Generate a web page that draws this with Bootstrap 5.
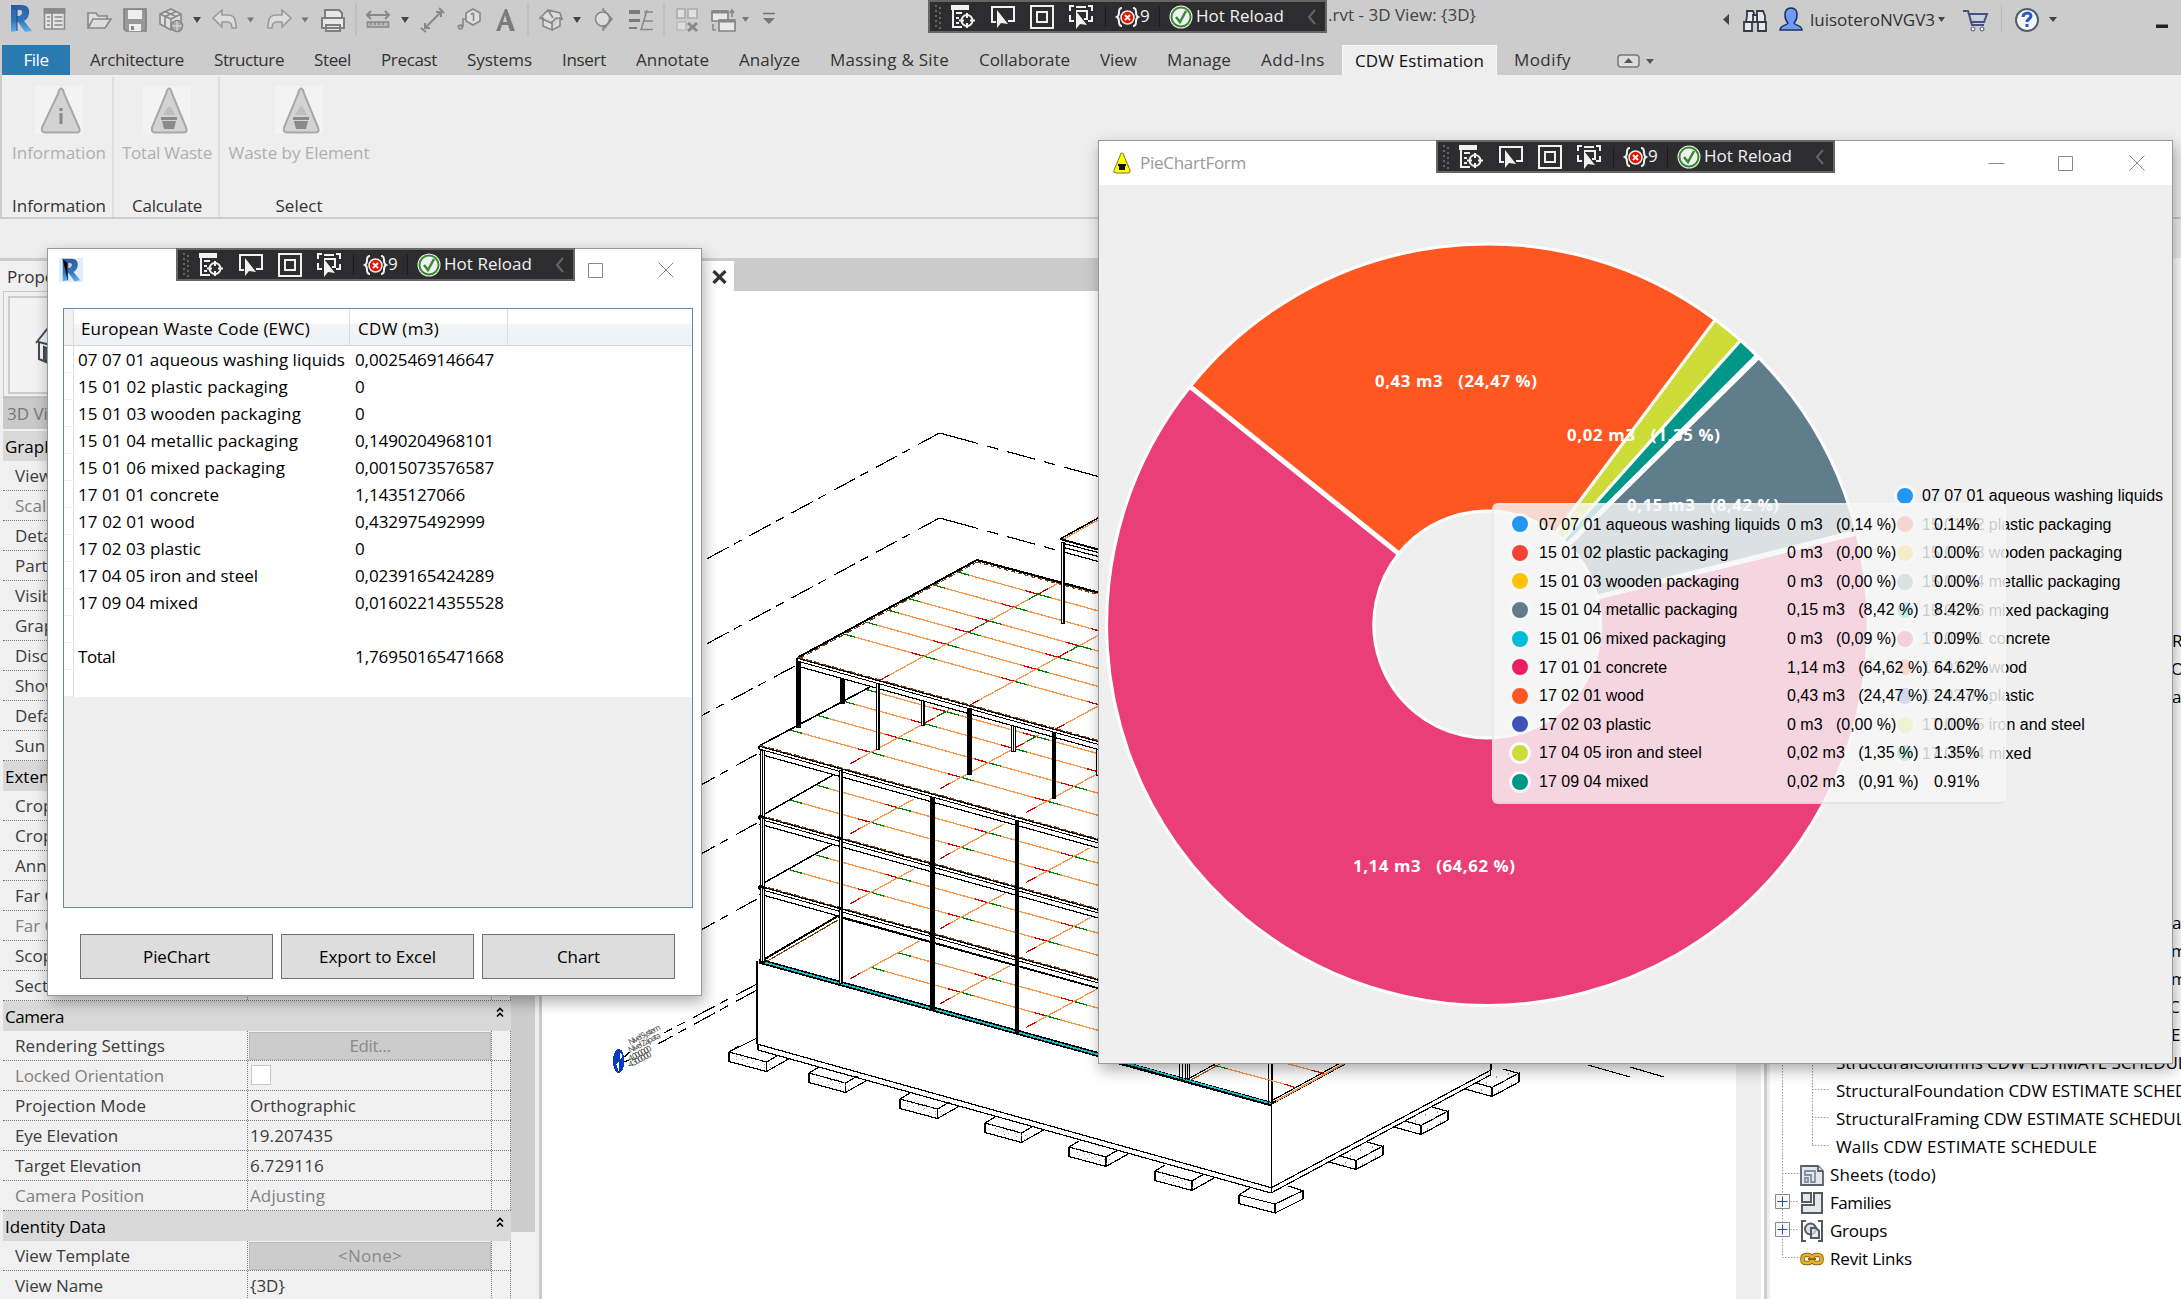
<!DOCTYPE html>
<html lang="en">
<head>
<meta charset="utf-8">
<meta name="viewport" content="width=device-width, initial-scale=1">
<title>3D View: {3D}</title>
<link rel="stylesheet" href="https://cdn.jsdelivr.net/npm/bootstrap@5.3.0/dist/css/bootstrap.min.css">
<script src="https://cdn.jsdelivr.net/npm/bootstrap@5.3.0/dist/js/bootstrap.bundle.min.js"></script>
<style>
body{margin:0;overflow:hidden;background:#eee;font-family:"Open Sans","Noto Sans",sans-serif;font-size:17px;line-height:1.2;color:#333}
.app{width:2181px;height:1299px;overflow:hidden}
svg{display:block;flex:none}
[data-w]{white-space:pre;display:inline-block}
.titlebar{height:45px;background:#ccc}
.tabs{height:30px;background:#ccc;padding-left:2px}
.tabs .nav-link{height:30px;padding:0 15px;color:#333;border:0;border-radius:0;display:flex;align-items:center;line-height:28px}
.tabs .nav-link.file-tab{background:#2a7ab2;color:#fff;width:68px;padding:0;justify-content:center;margin-right:5px}
.tabs .nav-link.active{background:#eee;color:#111;border:1px solid #f6f6f6;border-bottom:0;padding:0 12px;margin:0 0 0 2px}
.ribbon{height:144px;background:#eee;border-bottom:2px solid #ccc;border-left:2px solid #ccc}
.rpanel{border-right:2px solid #ddd;margin-top:2px;height:140px}
.rpanel:last-child{border:0}
.rpanel .dis{color:#b0b0b0;margin-top:9px;height:22px}
.rpanel .cap{margin-bottom:1px}
.titlebar,.tabs,.ribbon,.spacer,.fixcol,.props,.split,.canvas3d{flex:none}
.spacer{height:39px}
main{min-height:0}
.props{width:539px;background:#f0f0f0;border-top:3px solid #ccc;padding-left:3px}
.ptable{width:508px}
.phead{height:30px;background:#d9d9d9;color:#000;padding-left:2px;line-height:31px;display:flex;justify-content:space-between;padding-right:6px}
.phead svg{margin-top:5px}
.prow{height:30px;border-bottom:1px dotted #777;display:flex;line-height:29px;color:#3c3c3c}
.prow>div:nth-child(1){width:244px;padding-left:12px}
.prow>div:nth-child(2){width:244px;padding-left:2px;border-left:1px dotted #777}
.prow>div:nth-child(3){flex:1;border-left:1px dotted #777;border-right:1px dotted #777}
.prow.off{color:#808080}
.pbtn{background:#ccc;border:1px solid #bbb;color:#8a8a8a;height:28px;line-height:26px;text-align:center;margin:1px 0 0 -1px}
.pcheck{width:20px;height:20px;background:#fff;border:1px solid #c8c8c8;margin:4px 0 0 1px}
.preview{height:106px;border:1px solid #c8c8c8;padding:4px}
.preview>div{border:2px solid #ccc;height:98px;padding:27px 0 0 24px;background:#f2f2f2}
.selrow{height:32px;background:#c9c9c9;color:#777;line-height:32px;padding-left:4px;margin-bottom:2px;border-top:1px solid #bbb}
.scroller{width:24px}
.scroller .thumb{height:971px;background:#cdcdcd}
.split{width:3px;background:#ccc}
.canvas3d{width:1194px;background:#fff}
.viewtabs{height:33px;background:#cbcbcb}
.vtab{width:192px;height:30px;margin-top:3px;background:#fff;padding-right:7px}
.tree{background:#fff;color:#000;position:relative;min-width:0}
.tree .trow{height:28px;padding-left:60px;white-space:nowrap;gap:6px}
.tree .trow.sub{padding-left:66px}
.win{position:absolute;background:#fff;border:1px solid #999;box-shadow:2px 6px 14px rgba(0,0,0,.32);overflow:visible}
.dbgbar{position:absolute;width:399px;height:33px;background:#2d2d30;border:2px solid #666;z-index:5;color:#f1f1f1}
.dbgbar svg{position:absolute;left:-2px;top:-2px}
.dbgbar span{position:absolute;font-size:17px;line-height:20px;top:4px}
.gridbox{margin:59px 8px 0 15px;height:600px;border:1px solid #688caf;background:#efefef;color:#000}
.ghead{height:37px;background:linear-gradient(#fff 40%,#f3f4f6 42%,#eff1f3);border-bottom:1px solid #d5d5d5}
.ghead>div{height:36px;line-height:39px;border-right:1px solid #dcdcdc}
.grow{height:27px;line-height:27px;background:#fff}
.grow>div:first-child,.ghead>div:first-child{width:10px;background:#fff;border-right:1px solid #ddd}
.grow>div:first-child{border-bottom:1px solid #ececec}
.ghead>div:first-child{background:#f0f0f0}
.dlgbtn{width:193px;height:45px;background:#ddd;border:1px solid #707070;border-radius:0;color:#000;font-size:17px;padding:0}
.dlgbtn:hover{background:#ddd}
.lg{font-family:"Liberation Sans",Arial,sans-serif;font-size:16px;color:#000;white-space:pre}
.legendbox{position:absolute;left:795px;top:340.5px}
.lrow{height:28.6px;display:flex;align-items:center}
.lrow>span{flex:none}
.dotc{width:22px;height:22px;border-radius:50%;border:3px solid #f8f8f8}
.tipbox{position:absolute;left:393px;top:362px;width:514px;height:301px;background:rgba(247,247,247,.82);border-radius:6px;border:2px solid rgba(255,255,255,.25);border-left-color:rgba(215,215,215,.35);border-bottom-color:rgba(200,200,200,.35);padding:5px 0 0 15px}
.tn{width:256px;padding-left:8px}.tv{width:147px}
</style>
</head>
<body>
<div class="app d-flex flex-column position-relative">
  <header class="titlebar d-flex">
    <svg width="800" height="45" viewBox="0 0 800 45" fill="none" stroke="#888" stroke-width="1.6">
      <defs><linearGradient id="rg" x1="0" y1="0" x2="0" y2="1"><stop offset="0" stop-color="#2a5ea6"/><stop offset=".6" stop-color="#3476bd"/><stop offset="1" stop-color="#5cb3ea"/></linearGradient></defs>
      <g id="rlogo"><path d="M11 5h10c7 0 9 4 8 9-1 4-3 6-5 7l8 10-7 1-7-10-1 0v9l-6 1z" fill="url(#rg)" stroke="none"/><path d="M17 10h3c3 0 3 5-1 6h-2z" fill="#ccc" stroke="none"/><path d="M11 5l6 5v21" stroke="#1b4a86" stroke-width="1"/></g>
      <path d="M44.500 9h20v20h-20z" fill="#e4e4e4" stroke="#8b8b8b"/><path d="M44.500 9h20v4h-20z" fill="#8b8b8b"/><path d="M52 13v16M54.500 17h8M54.500 21h8M54.500 25h8M47 17h3M47 21h3M47 25h3"/>
      <path d="M88 28V13h8l2 3h9v4M88 28l5-9h18l-6 9z" fill="#ddd"/>
      <path d="M124 9h22v22h-20l-2-2z" fill="#999" stroke="#808080"/><path d="M128 10h14v9h-14zM129 24h12v7h-12z" fill="#eee" stroke="none"/><path d="M131 26h3v4h-3z" fill="#888" stroke="none"/>
      <path d="M171 9l10 5v10l-10 6-11-6V14z" fill="#ddd"/><path d="M160 14l11 5 10-5M171 19v11M165 11.500l11 5M176 11.500l-11 5v10"/><circle cx="177" cy="26" r="5.500" fill="#aaa"/><path d="M172 26h10M177 21v10" stroke="#ddd" stroke-width="1"/>
      <path d="M213 18l9-8v5h6c6 0 8 4 8 13h-4c0-4-1-6-5-6h-5v5z" fill="#ddd" stroke="#9a9a9a"/>
      <path d="M291 18l-9-8v5h-6c-6 0-8 4-8 13h4c0-4 1-6 5-6h5v5z" fill="#ddd" stroke="#9a9a9a"/>
      <path d="M325 18v-8h14l3 3v5M322 18h22v10h-22zM326 25h14v6h-14z" fill="#e8e8e8" stroke="#7e7e7e" stroke-width="2"/>
      <path d="M367 15h22M371 11l-4 4 4 4M385 11l4 4-4 4" stroke-width="2"/><path d="M367.500 22h21v5h-21z" fill="#bbb"/><path d="M371 22v3M375 22v3M379 22v3M383 22v3"/>
      <path d="M425 28l16-16M425 23v5h5M436 12h5v5M421 28l5 4M439 8l5 5" stroke-width="2"/>
      <path d="M473 9l7 4v8l-7 4-7-4v-8z" fill="#ddd"/><path d="M473.500 13v8M471 14.500l2-1.500M460 26h3v-7h3"/><circle cx="460.500" cy="27" r="2"/>
      <path d="M505 9l-9 22h4l2-6h6l2 6h5l-8-22zM505 15l2 7h-4z" fill="#7b7b7b" stroke="none" fill-rule="evenodd"/>
      <path d="M543 17v9l9 4v-9M552 30l8-4v-9M540 18l8-8 12 3 2 6-6-1-5 5zM548 10l5 8" fill="#ddd"/>
      <path d="M604 9l9 10-9 11" fill="#888" stroke="none"/><circle cx="602.500" cy="19" r="7" fill="#ddd"/><path d="M603 8v3M603 26v5"/>
      <path d="M629 10h11v4h-11zM629 19h11v3h-11zM629 27h8v2h-8z" fill="#7b7b7b" stroke="none"/><path d="M641 30l6-20M644 12h9M643 21h10M640 29.500h13" stroke-width="1.500"/>
      <path d="M677 9h8v9h-8zM688 9h9v9h-9z" fill="#e0e0e0" stroke="#aaa"/><path d="M677 22h9v8h-9z" fill="#ddd" stroke="#bbb"/><path d="M688 23l9 8M697 23l-9 8" stroke="#888" stroke-width="3"/>
      <path d="M712 11h16v10h-16zM719 20h16v11h-16z" fill="#e8e8e8" stroke="#808080"/><path d="M712 12h16M719 21h16" stroke-width="3"/><path d="M732 11v6M730 13l2-3 2 3M713 24v6h3"/>
      <path d="M763 13.500h12" stroke="#777"/>
      <g fill="#444" stroke="none"><path d="M193 17h8l-4 6zM401 17h8l-4 6zM573 17h8l-4 6z"/><path d="M247 17.500h7l-3.500 5zM301.500 17.500h7l-3.500 5zM742 17h7l-3.500 5zM763 18h12l-6 6z" fill="#777"/></g>
      <path d="M356 3v33M528 3v33M664 3v33" stroke="#bbb" stroke-width="1.500"/>
    </svg>
    <div class="fixcol" style="width:528px"></div>
    <div class="fixcol" style="width:380px;padding-top:5px"><span data-w="148" style="color:#444">.rvt - 3D View: {3D}</span></div>
    <svg width="102" height="45" viewBox="1708 0 102 45"><path d="M1729 14v11l-6-5.500z" fill="#444"/>
      <g fill="#e8e8ea" stroke="#333a48" stroke-width="1.800"><path d="M1747 11h6l1 3v8h-8l1-6zM1757 11h6l2 5v6h-8v-8zM1744 22h8v9h-8zM1758 22h8v9h-8z"/><path d="M1753 15h4v7h-4z"/></g>
      <g fill="#6f9bf5" stroke="#1b2f66" stroke-width="1.500"><path d="M1791 8c5 0 6 4 6 7 0 4-2 7-3 8 0 2 8 2 8 7h-22c0-5 8-5 8-7-1-1-3-4-3-8 0-3 1-7 6-7z"/></g></svg>
    <div class="fixcol" style="width:125px;padding-top:10px"><span data-w="125">luisoteroNVGV3</span></div>
    <svg width="246" height="45" viewBox="1935 0 246 45"><path d="M1938 17h7l-3.500 5zM2049 17h8l-4 5z" fill="#444"/><path d="M1963 11h5l4 14h12M1969 14h18l-3 8h-13z" fill="#c8d0e0" stroke="#46527c" stroke-width="2"/><circle cx="1973" cy="29" r="2" fill="#fff" stroke="#46527c"/><circle cx="1982" cy="29" r="2" fill="#fff" stroke="#46527c"/><path d="M2001.500 5v27" stroke="#bbb"/><circle cx="2027" cy="20" r="11" fill="#f4f6fa" stroke="#555c68" stroke-width="2"/><path d="M2023 17c0-5 8-5 8-1 0 3-4 3-4 6" fill="none" stroke="#2b59b8" stroke-width="3"/><path d="M2025.500 24h3v3h-3z" fill="#2b59b8"/><path d="M2156 24.500h12v3.500h-12z" fill="#222"/></svg>
  </header>
  <nav class="nav tabs flex-nowrap">
    <a class="nav-link file-tab"><span data-w="25">File</span></a>
    <a class="nav-link"><span data-w="94">Architecture</span></a><a class="nav-link"><span data-w="70">Structure</span></a><a class="nav-link"><span data-w="37">Steel</span></a><a class="nav-link"><span data-w="56">Precast</span></a><a class="nav-link"><span data-w="65">Systems</span></a><a class="nav-link"><span data-w="44">Insert</span></a><a class="nav-link"><span data-w="73">Annotate</span></a><a class="nav-link"><span data-w="61">Analyze</span></a><a class="nav-link"><span data-w="119">Massing &amp; Site</span></a><a class="nav-link"><span data-w="91">Collaborate</span></a><a class="nav-link"><span data-w="37">View</span></a><a class="nav-link"><span data-w="64">Manage</span></a><a class="nav-link"><span data-w="64">Add-Ins</span></a><a class="nav-link active"><span data-w="129">CDW Estimation</span></a><a class="nav-link" style="margin-left:2px"><span data-w="57">Modify</span></a>
    <svg width="60" height="30" style="margin-left:28px"><rect x="4" y="10" width="21" height="12" rx="3" fill="#ddd" stroke="#777" stroke-width="1.500"/><path d="M10 18h9l-4.500-5zM32 14h8l-4 5z" fill="#555"/></svg>
  </nav>
  <section class="ribbon d-flex">
    <div class="rpanel d-flex flex-column align-items-center" style="width:112px;padding-left:4px"><svg width="48" height="48" style="margin-top:9px"><rect width="48" height="48" fill="#f3f3f3"/><path d="M26 2.500q2 0 3 5l15 34q2 5-2 5H10q-4 0-3-5L23 8q1-5 3-5.500z" fill="#d3d3d3" stroke="#a8a8a8" stroke-width="2"/><path d="M26 22v3M26 27v11" stroke="#888" stroke-width="3"/></svg><span class="dis" data-w="94">Information</span><span class="cap mt-auto" data-w="94">Information</span></div>
    <div class="rpanel d-flex flex-column align-items-center" style="width:106px;padding-left:2px"><svg width="48" height="48" style="margin-top:9px"><g id="cone"><rect width="48" height="48" fill="#f3f3f3"/><path d="M26 2.500q2 0 3 5l14 34q2 5-2 5H12q-4 0-3-5L23 8q1-5 3-5.500z" fill="#d3d3d3" stroke="#a8a8a8" stroke-width="2"/><path d="M18 31h16v3H18zM19 35h14l-2 8H21z" fill="#8a8a8a"/><path d="M20 29l4-7 3-2 2 3 3 6z" fill="#bebebe"/></g></svg><span class="dis" data-w="90">Total Waste</span><span class="cap mt-auto" data-w="70">Calculate</span></div>
    <div class="rpanel d-flex flex-column align-items-center" style="width:158px"><svg width="48" height="48" style="margin-top:9px"><use href="#cone"/></svg><span class="dis" data-w="141">Waste by Element</span><span class="cap mt-auto" data-w="47">Select</span></div>
  </section>
  <div class="spacer"></div>
  <main class="d-flex flex-grow-1">
    <aside class="props d-flex">
      <div class="ptable">
        <div style="height:30px;padding:6px 0 0 4px;color:#333">Properties</div>
        <div class="preview"><div><svg width="60" height="44" fill="#d8dde3" stroke="#444b57" stroke-width="2"><path d="M5 17v17l19 8V22z" fill="#f4f6f8"/><path d="M2 18L14 3l22-2 18 16v18l-30 7V22L14 3" /><path d="M10 35V22l5 2v13zM30 40V25h8v13z" fill="#555c66"/></svg></div></div>
        <div class="selrow">3D View</div>
        <div id="proprows"></div>
      </div>
      <div class="scroller"><div class="thumb"></div></div>
    </aside>
    <div class="split"></div>
    <section class="canvas3d">
      <div class="viewtabs d-flex"><div class="vtab d-flex justify-content-end align-items-center"><svg width="15" height="14" style="margin-top:2px"><path d="M1.500 1l12 12M13.500 1l-12 12" stroke="#333" stroke-width="3.200"/></svg></div></div>
      <svg id="model" width="1194" height="1008" viewBox="542 291 1194 1008" fill="none" stroke="#000" stroke-width="1.200" shape-rendering="crispEdges"></svg>
    </section>
    <div class="fixcol" style="width:25px;background:#eee"></div><div class="fixcol" style="width:3px;background:#fff"></div><div class="split"></div><div class="fixcol" style="width:3px;background:#eee"></div>
    <section class="tree flex-grow-1 overflow-hidden">
      <svg width="60" height="1041" viewBox="1770 258 60 1041" style="position:absolute;left:0;top:0" fill="none" stroke="#999" stroke-dasharray="1.500 1.500"><path d="M1782.500 300V1257.500M1812.500 300V1145.500M1812 1089.500h21M1812 1117.500h21M1812 1145.500h21M1782 1173.500h17M1790 1201.500h9M1790 1229.500h9M1782 1257.500h17"/><g stroke-dasharray="none" stroke="#888" fill="#f6f6f6"><path d="M1775.500 1194.500h14v14h-14zM1775.500 1222.500h14v14h-14z"/><path d="M1777.500 1201.500h10M1782.500 1196.500v10M1777.500 1229.500h10M1782.500 1224.500v10" stroke="#2b4fa0"/></g></svg>
      <div style="height:369px"></div>
      <div class="trow sub d-flex align-items-center" style="padding-left:402px">R</div>
      <div class="trow sub d-flex align-items-center" style="padding-left:401px">O</div>
      <div class="trow sub d-flex align-items-center" style="padding-left:402px">a</div>
      <div style="height:198px"></div>
      <div class="trow sub d-flex align-items-center" style="padding-left:402px">a</div>
      <div class="trow sub d-flex align-items-center" style="padding-left:401px">m</div>
      <div class="trow sub d-flex align-items-center" style="padding-left:401px">m</div>
      <div class="trow sub d-flex align-items-center" style="padding-left:399px">CD</div>
      <div class="trow sub d-flex align-items-center" style="padding-left:401px">EN</div>
      <div class="trow sub d-flex align-items-center"><span data-w="360">StructuralColumns CDW ESTIMATE SCHEDULE</span></div>
      <div class="trow sub d-flex align-items-center"><span data-w="382">StructuralFoundation CDW ESTIMATE SCHEDULE</span></div>
      <div class="trow sub d-flex align-items-center"><span data-w="358">StructuralFraming CDW ESTIMATE SCHEDULE</span></div>
      <div class="trow sub d-flex align-items-center"><span data-w="261">Walls CDW ESTIMATE SCHEDULE</span></div>
      <div class="trow d-flex align-items-center" style="padding-left:30px"><svg width="24" height="22" fill="#e4e8ec" stroke="#5a6068" stroke-width="1.800"><path d="M1 2h17l5 5v14H1z"/><path d="M5 7h10v11h-4v-7H5zM5 14h3v4H5z" stroke="#8090a0"/><path d="M18 2v5h5"/></svg><span data-w="106">Sheets (todo)</span></div>
      <div class="trow d-flex align-items-center" style="padding-left:30px"><svg width="24" height="24" fill="#e6e8ec" stroke="#555a62" stroke-width="2"><path d="M2 2h9v9H2zM14 2h8v20H2v-8h12z"/></svg><span data-w="61">Families</span></div>
      <div class="trow d-flex align-items-center" style="padding-left:30px"><svg width="24" height="24" fill="none" stroke="#555a62" stroke-width="2"><path d="M6 2H2v20h4M18 2h4v20h-4"/><circle cx="10.500" cy="10" r="5.500" fill="#dde2ea"/><path d="M11 9h5l3 3v7h-8z" fill="#dde2ea" fill-opacity=".7"/></svg><span data-w="57">Groups</span></div>
      <div class="trow d-flex align-items-center" style="padding-left:30px"><svg width="24" height="14" fill="none" stroke="#8a6412" stroke-width="4.500"><rect x="2.500" y="3" width="9" height="8" rx="3"/><rect x="12.500" y="3" width="9" height="8" rx="3"/><g stroke="#e8b324" stroke-width="2.500"><rect x="2.500" y="3" width="9" height="8" rx="3"/><rect x="12.500" y="3" width="9" height="8" rx="3"/></g><path d="M8 7h8" stroke-width="2"/></svg><span data-w="82">Revit Links</span></div>
    </section>
  </main>

  <div class="dbgbar" style="left:928px;top:0"></div>

  <!-- waste data window -->
  <div class="win" style="left:47px;top:248px;width:655px;height:748px">
    <svg width="24" height="24" viewBox="8 4 26 29" style="position:absolute;left:11px;top:9px;background:#e3edf8"><use href="#rlogo"/></svg>
    <svg width="90" height="18" style="position:absolute;left:539px;top:12px" fill="none" stroke="#888"><path d="M1.500 2.500h14v14h-14zM71.500 1.500l15 15M86.500 1.500l-15 15"/></svg>
    <div class="dbgbar" style="left:128px;top:-1px"></div>
    <div class="gridbox">
      <div class="ghead d-flex"><div></div><div style="width:276px;padding-left:7px"><span data-w="229">European Waste Code (EWC)</span></div><div style="width:158px;padding-left:8px"><span data-w="81">CDW (m3)</span></div></div>
      <div id="gridrows"></div>
    </div>
    <div class="d-flex" style="gap:8px;margin:26px 0 0 32px"><button class="btn dlgbtn"><span data-w="67">PieChart</span></button><button class="btn dlgbtn"><span data-w="117">Export to Excel</span></button><button class="btn dlgbtn"><span data-w="43">Chart</span></button></div>
  </div>

  <!-- pie chart window -->
  <div class="win" style="left:1098px;top:140px;width:1075px;height:924px">
    <div class="d-flex align-items-center" style="height:44px;padding-left:13px;color:#999"><svg width="20" height="22" style="margin-right:8px"><path d="M10 1q2 0 2 3l6 14q1 3-2 3H4q-3 0-2-3L8 4q0-3 2-3z" fill="#ff0" stroke="#77772a"/><path d="M6 12h8v2H6zM7 14h6v4H7z" fill="#111"/></svg><span data-w="106">PieChartForm</span>
      <svg class="ms-auto" width="160" height="18" style="margin-right:26px;margin-bottom:1px" fill="none" stroke="#888"><path d="M1.500 9.500h16M71.500 2.500h14v14h-14zM142.500 1.500l15 15M157.500 1.500l-15 15" transform="translate(1 0)"/></svg></div>
    <div class="dbgbar" style="left:337px;top:-1px"></div>
    <div style="height:878px;background:#efefef"><svg id="pie" width="1073" height="878" viewBox="1099 185 1073 878"></svg></div>
    <div class="legendbox lg" id="legend"></div>
    <div class="tipbox lg" id="tip"></div>
  </div>
</div>
<script>
// debug toolbar shared by the three windows
document.querySelectorAll('.dbgbar').forEach(b=>{b.innerHTML=`<svg width="399" height="33" fill="none" stroke="#f1f1f1" stroke-width="2"><path d="M8 5v25M12 7v22" stroke="#666" stroke-dasharray="2 3"/>
<path d="M25 28V6M24 7h16M25 27h9M28 13h6M28 18h3M28 23h3"/><path d="M24 6h16v3H24z" fill="#f1f1f1"/><circle cx="39" cy="20.500" r="5.500"/><path d="M39 13v5M39 23v5M31 20.500h5M42 20.500h5"/>
<path d="M68 22h-4V7h22v14h-6"/><path d="M69 10v18l4-5 7 1z" fill="#f1f1f1" stroke="none"/>
<path d="M103 6h22v22h-22zM109 12h10v10h-10z"/>
<path d="M146 6h-4v5M142 15v6h4M160 6h4v5M164 16v5h-4M148 7h10M148 11h11v8h-3"/><path d="M148 11v18l4-5 7 1z" fill="#f1f1f1" stroke="none"/>
<path d="M177.500 6v21M231.500 6v21" stroke="#1c1c1e" stroke-width="1"/>
<path d="M194 8q-3 0-3 4t-2 5q2 1 2 5t3 4M205 8q3 0 3 4t2 5q-2 1-2 5t-3 4"/><circle cx="199.500" cy="17.500" r="6.500" fill="#e51400" stroke="#f1f1f1" stroke-width="1.500"/><path d="M197 15l5 5M202 15l-5 5"/>
<circle cx="253" cy="17" r="11.500" fill="#f1f1f1" stroke="none"/><circle cx="253" cy="17" r="9.500" stroke="#388a34" stroke-width="2"/><path d="M248 17l4 5 6-11" stroke="#388a34" stroke-width="2.500"/>
<path d="M387 10l-6 7 6 7" stroke="#666"/></svg><span style="left:210px">9</span><span style="left:266px" data-w="88">Hot Reload</span>`});

// property grid: [label, value, kind]
const P=[['h','Graphics'],['View Scale'],['Scale Value',,1],['Detail Level'],['Parts Visibility'],['Visibility/Gra'],['Graphic Disp'],['Discipline'],['Show Hidden'],['Default Analy'],['Sun Path'],['h','Extents'],['Crop View'],['Crop Region'],['Annotation C'],['Far Clip Activ'],['Far Clip Offse',,1],['Scope Box'],['Section Box'],['h','Camera'],['Rendering Settings','<div class="pbtn"><span data-w="41">Edit...</span></div>'],['Locked Orientation','<div class="pcheck"></div>',1],['Projection Mode','Orthographic'],['Eye Elevation','19.207435'],['Target Elevation','6.729116'],['Camera Position','Adjusting',1],['h','Identity Data'],['View Template','<div class="pbtn"><span data-w="64">&lt;None&gt;</span></div>'],['View Name','{3D}']];
const PW={'Rendering Settings':150,'Locked Orientation':149,'Projection Mode':131,'Eye Elevation':103,'Target Elevation':126,'Camera Position':129,'View Template':115,'View Name':88,Orthographic:106,'19.207435':83,'6.729116':74,Adjusting:75,Camera:59,'Identity Data':101};
const T=t=>PW[t]?`<span data-w="${PW[t]}">${t}</span>`:(t||'');
proprows.innerHTML=P.map(r=>r[0]=='h'?`<div class="phead"><span>${T(r[1])}</span><svg width="10" height="14" fill="none" stroke="#000" stroke-width="1.600"><path d="M2 5.500l3-3 3 3M2 10.500l3-3 3 3"/></svg></div>`:`<div class="prow ${r[2]?'off':''}"><div>${T(r[0])}</div><div>${T(r[1])}</div><div></div></div>`).join('');

// waste rows: name, volume, label width, value width
const G=[['07 07 01 aqueous washing liquids','0,0025469146647',267,139],['15 01 02 plastic packaging','0',210,10],['15 01 03 wooden packaging','0',223,10],['15 01 04 metallic packaging','0,1490204968101',220,139],['15 01 06 mixed packaging','0,0015073576587',207,139],['17 01 01 concrete','1,1435127066',141,110],['17 02 01 wood','0,432975492999',117,130],['17 02 03 plastic','0',123,10],['17 04 05 iron and steel','0,0239165424289',180,139],['17 09 04 mixed','0,01602214355528',120,149],['',''],['Total','1,76950165471668',37,149],['','']];
gridrows.innerHTML=G.map(r=>`<div class="grow d-flex"><div></div><div style="width:276px;padding-left:4px">${r[0]&&`<span data-w="${r[2]}">${r[0]}</span>`}</div><div style="padding-left:5px">${r[1]&&`<span data-w="${r[3]}">${r[1]}</span>`}</div></div>`).join('');

const C=['#2196f3','#f44336','#ffc107','#607d8b','#00bcd4','#e91e63','#ff5722','#3f51b5','#cddc39','#009688'];
const V=['0 m3   (0,14 %)','0 m3   (0,00 %)','0 m3   (0,00 %)','0,15 m3   (8,42 %)','0 m3   (0,09 %)','1,14 m3   (64,62 %)','0,43 m3   (24,47 %)','0 m3   (0,00 %)','0,02 m3   (1,35 %)','0,02 m3   (0,91 %)'];
const Q=['0.14%','0.00%','0.00%','8.42%','0.09%','64.62%','24.47%','0.00%','1.35%','0.91%'];
legend.innerHTML=C.map((c,i)=>`<div class="lrow"><span class="dotc" style="background:${c}"></span><span style="padding-left:6px">${G[i][0]}</span></div>`).join('');
tip.innerHTML=C.map((c,i)=>`<div class="lrow"><span class="dotc" style="background:${c}"></span><span class="tn">${G[i][0]}</span><span class="tv">${V[i]}</span><span>${Q[i]}</span></div>`).join('');

// doughnut
const cx=1487.3,cy=624.6,R=380.7,r0=113.5,pt=(a,r)=>{a=a*Math.PI/180;return (cx+r*Math.sin(a)).toFixed(1)+' '+(cy-r*Math.cos(a)).toFixed(1)};
const slice=(a,b,c)=>`<path d="M${pt(a,R)}A${R} ${R} 0 ${b-a>180?1:0} 1 ${pt(b,R)}L${pt(b,r0)}A${r0} ${r0} 0 ${b-a>180?1:0} 0 ${pt(a,r0)}z" fill="${c}" stroke="#fff" stroke-width="3"/>`;
pie.innerHTML=slice(45,45.5,C[0])+slice(45.500,75.8,C[3])+slice(75.8,76.2,C[4])+slice(76.2,308.7,'#ea3e79')+slice(308.7,396.8,C[6])+slice(396.8,401.7,C[8])+slice(401.7,405,C[9])+
`<path d="M${pt(45.25,R)}L${pt(45.25,r0)}M${pt(76,R)}L${pt(76,r0)}M${pt(308.7,R)}L${pt(308.7,r0)}" stroke="#fff" stroke-width="5"/><g fill="#fff" font-family="Open Sans" font-weight="700" font-size="16.8" xml:space="preserve" style="white-space:pre">`+
[[1375,387,162,V[6]],[1567,440.5,153,V[8]],[1627,510.500,152,V[3]],[1353,872,162,V[5]]].map(t=>`<text x="${t[0]}" y="${t[1]}" textLength="${t[2]}">${t[3].replace(/ /g,'\u00a0')}</text>`).join('')+'</g>';

// building model
const k=.277,q=-.544;let s='',n=0;
const L=(x1,y1,x2,y2,a='')=>s+=`<path d="M${x1} ${y1}L${x2} ${y2}" ${a}/>`;
const poly=(p,a='')=>s+=`<polyline points="${p}" ${a}/>`;
const D='stroke-dasharray="24 9 9 6"',E='stroke-dasharray="40 9 12 9 29 9 12 9"';
[[562,433],[647,518]].forEach(([a,b])=>{L(939.5,b,701,a,D);L(939.5,b,1100,b+44,E)});
[[795,666,701,716],[757,754,701,785],[757,823,701,854],[757,899,701,930],[757,984,664,1033],[757,990,658,1044]].forEach(l=>L(...l,D));
const floorV=[9,30,57,83,105,127,148,173,197],roofV=[0,45,67,89,110,135,159,180],us=[0,82,172,258,342,430];
// framing lines of one floor, clipped to its visible outline
function floor(x0,y0,clip,ub=0,vs=floorV){const id='c'+(n++);s+=`<clipPath id="${id}"><polygon points="${clip}"/></clipPath><g clip-path="url(#${id})" stroke-width="1.300">`;
 const P=(u,v)=>[x0+u+v,y0+u*k+v*q];
 vs.slice(1).forEach(v=>{for(let i=ub;i<5;i++){const a=us[i],b=us[i+1];[[a,a+13,'#008000'],[a+13,b-13,'#f79646'],[b-13,b,'#d00000']].forEach(g=>L(...P(g[0],v),...P(g[1],v),`stroke="${g[2]}"`))}});
 for(let i=Math.max(ub,1);i<6;i++)for(let j=0;j<vs.length-1;j++){const a=vs[j],b=vs[j+1];L(...P(us[i],a),...P(us[i],b),'stroke="#f79646"');if(j%3==0)L(...P(us[i],a),...P(us[i],a+10),'stroke="#d00000"');if(j==3||j==5)L(...P(us[i],b-9),...P(us[i],b),'stroke="#008000"')}
 s+='</g>'}
floor(797,658,'797,658 977,560 1100,593 1100,742',0,roofV);
floor(759,746,'759,746 797,724 870,687 1100,752 1100,840');
floor(759,816,'759,816 833,777 1100,851 1100,910');
floor(759,886,'759,886 833,846 1100,920 1100,979');
floor(759,961,'838,983 838,919 1100,990 1100,1056',1);
L(797,658,977,560,'stroke-width="2"');L(799,659,977,562,'stroke="#7a4310" stroke-dasharray="6 3"');L(977,560,1100,593,'stroke-width="2.2"');L(977,562,1100,595,'stroke="#7a4310" stroke-dasharray="4 3"');
L(759,746,870,687,'stroke-width="1.600"');L(763,815,833,775,'stroke-width="1.500"');L(762,884,833,844,'stroke-width="1.500"');L(763,960,838,916,'stroke-width="2"');L(764,963,838,920,'stroke="#7a4310"');L(838,917,1100,989);
function beam(x,y){poly(`${x},${y} 1100,${y+(1100-x)*k} 1100,${y+8+(1100-x)*k} ${x},${y+8}`,'fill="#fff" stroke="none"');L(x,y,1100,y+(1100-x)*k,'stroke-width="1.500"');L(x,y-1,1100,y-1+(1100-x)*k,'stroke="#7a4310" stroke-dasharray="6 3"');L(x,y+3,1100,y+3+(1100-x)*k,'stroke-width="1"');L(x,y+8,1100,y+8+(1100-x)*k);L(x,y,x,y+3)}
function col(a,b,y1,y2,w=1){a=Math.floor(a)+.5;b=Math.floor(b)+.5;s+=`<rect x="${a}" y="${y1}" width="${b-a}" height="${y2-y1}" fill="#fff" stroke-width="1"/>`;L(a+2,y1,a+2,y2,`stroke-width="${w}"`);if(w>1)L(a+.5,y1,a+.5,y2,'stroke-width="2"')}
col(840,844,677,703,2);col(921,924,700,725);col(1011,1015,725,751);col(1096,1099,749,775);
beam(797,658);col(796,800,661,727,2);col(876,879,683,749);col(967,971,708,774,2);col(1052,1055,732,798,3);
beam(759,746);beam(759,816);beam(759,886);
poly('759,961 1100,1055','stroke-width="5"');poly('765,962.5 1100,1055','stroke="#19c3cf" stroke-width="1.700"');
col(760,764,750,961);col(839,842,770,983);col(930,934,797,1009,2);col(1015,1018,821,1033,3);
[816,886].forEach(y=>{[[759,765],[838,843],[929.500,935],[1014.500,1018.500]].forEach(c=>{L(c[0],y+(c[0]-759)*k,c[1],y+(c[1]-759)*k,'stroke-width="2.500"')})});
poly('1060,539 1100,517','stroke-width="1.600"');L(1062,540,1100,519,'stroke="#f79646"');L(1060,539,1100,550,'stroke-width="2"');L(1062,543,1100,553);L(1062,547,1100,557);col(1061,1064,542,623);
// basement wall
L(757,961,757,1044);poly('757,1044 1271.4,1187.700 1491,1070 1491,1063');poly('758,1045 758,1050 1271,1193 1490.500,1075 1490.500,1070');L(1271.4,1104,1271.4,1193);
L(1118,1062,1271,1104,'stroke-width="4.500"');L(1118,1061,1271,1103.500,'stroke="#19c3cf" stroke-width="1.600"');
[1179.500,1182.500,1185.500,1187.500,1189.500].forEach(x=>L(x,1060,x,1080,'stroke-width="1"'));[1268.500,1271.500,1272.500].forEach(x=>L(x,1060,x,1104,'stroke-width="1"'));
L(1271,1104,1348,1062,'stroke-width="2"');L(1273,1100,1344,1061);L(1276,1101,1345,1063,'stroke="#f79646" stroke-width="1.600"');L(1188,1079,1217,1063);L(1191,1080,1220,1064,'stroke="#a06020"');
L(1214,1065,1228,1069,'stroke="#008000"');L(1228,1069,1284,1084,'stroke="#f79646"');L(1284,1084,1297,1088,'stroke="#d00000"');L(1285,1063,1311,1070,'stroke="#f79646"');L(1311,1070,1324,1073.500,'stroke="#d00000"');
L(1588,1065,1630,1077);L(1630,1067,1664,1077);
// footings
const foot=(x,y,w)=>{poly(`${x+10},${y-6} ${x},${y} ${x+w},${y+10} ${x+w},${y+19.500} ${x},${y+9.500} ${x},${y}`);poly(`${x+w},${y+10} ${x+w+12},${y+3}`);poly(`${x+w},${y+19.500} ${x+w+22},${y+7}`)
 for(let i=0;i<16;i++)s+=`<rect x="${x+6+(i*17)%(w+2)}" y="${y+1+(i*17)%(w+2)*.25+(i*5)%8}" width="1" height="1" fill="#999" stroke="none"/>`};
foot(729,1052,37.500);L(729,1052,757,1038);foot(809,1073,36.500);foot(900,1099,37.500);foot(985,1123,36.500);foot(1069,1147,37);foot(1155,1171,37);
poly('1250,1188 1239,1195 1275,1204 1275,1213 1239,1203.500 1239,1195');poly('1275,1204 1303,1190.700 1303,1199 1275,1213');L(1288,1186,1303,1190.700);
[[0,0],[65,-35],[136,-73]].forEach(([x,y])=>{s+=`<g transform="translate(${x} ${y})"><path d="M1329 1162l27 7.500 27-14.500v-9l-27 14.500v9M1340 1156l16 4.500M1367 1142l16 4.500"/><path d="M1350 1156h1M1360 1150h1M1368 1154h1M1372 1147h1M1362 1164h1M1375 1157h1M1345 1163h1" stroke="#999"/></g>`});
s+='<ellipse cx="618.700" cy="1061" rx="5" ry="11.500" fill="#0a3cc0" stroke="#0a3cc0"/><path d="M620 1052q4 4 0 8zM616 1064l3-2v10z" fill="#fff" stroke="none"/><g fill="#333" stroke="none" font-family="Open Sans" font-size="8" letter-spacing="-1"><text transform="translate(630 1045) rotate(-27)" textLength="34">Nivel System</text><text transform="translate(630 1053) rotate(-27)" textLength="34">Nivel Zapata</text><text transform="translate(629 1062) rotate(-27)" textLength="25">-4.000000</text><text transform="translate(629 1068) rotate(-27)" textLength="25">-4.300000</text></g>';
L(624,1057,630,1052);L(624,1062,629,1060);
model.innerHTML=s;

// match label widths through letter spacing
document.fonts.ready.then(()=>document.querySelectorAll('[data-w]').forEach(e=>{const w=e.getBoundingClientRect().width,t=+e.dataset.w;e.style.letterSpacing=((t-w)/e.textContent.length).toFixed(3)+'px'}));
</script>
</body>
</html>
